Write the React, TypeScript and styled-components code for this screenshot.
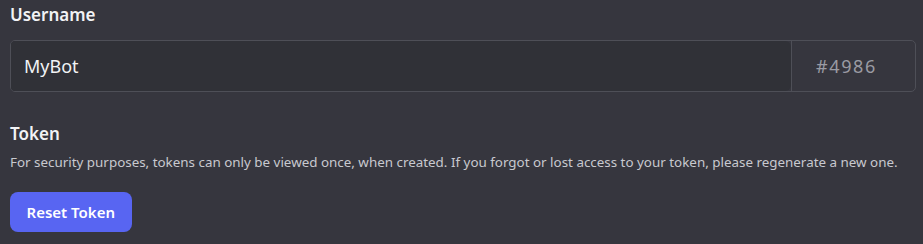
import React from 'react';
import styled, { createGlobalStyle } from 'styled-components';

const GlobalStyle = createGlobalStyle`
  html, body {
    margin: 0;
    padding: 0;
    background: #36363e;
  }
  body {
    font-family: "Noto Sans", "Open Sans", sans-serif;
    color: #f2f3f5;
  }
`;

const Page = styled.div`
  width: 923px;
  height: 244px;
  box-sizing: border-box;
  padding: 4px 7px 0 10px;
  background: #36363e;
`;

const Section = styled.section<{ $gap?: number }>`
  display: flex;
  flex-direction: column;
  margin-bottom: ${(p) => p.$gap ?? 0}px;
`;

const Heading = styled.h2`
  margin: 0;
  font-size: 17px;
  line-height: 22px;
  font-weight: 600;
  color: #f2f3f5;
`;

const InputWrap = styled.div`
  display: flex;
  margin-top: 14px;
  height: 52px;
  box-sizing: border-box;
  border: 1px solid #4e4f57;
  border-radius: 5px;
  overflow: hidden;
`;

const NameField = styled.div`
  flex: 1;
  display: flex;
  align-items: center;
  padding: 0 13px;
  background: #303137;
  border-radius: 0 6px 6px 0;
  font-size: 18px;
  color: #f2f3f5;
`;

const Discriminator = styled.div`
  width: 124px;
  box-sizing: border-box;
  padding-right: 14px;
  display: flex;
  align-items: center;
  justify-content: center;
  border-left: 1px solid #4e4f57;
  font-size: 18px;
  letter-spacing: 1.6px;
  color: #9a9ba3;
`;

const Description = styled.p`
  margin: 8px 0 0;
  font-size: 13.4px;
  line-height: 18px;
  color: #c8c9cf;
  white-space: nowrap;
`;

const Button = styled.button`
  margin-top: 21px;
  align-self: flex-start;
  height: 40px;
  padding: 0 16.5px;
  border: none;
  border-radius: 8px;
  background: #5865f2;
  color: #ffffff;
  font-family: inherit;
  font-size: 15px;
  font-weight: 600;
  cursor: pointer;
`;

export default function App() {
  return (
    <>
      <GlobalStyle />
      <Page>
        <Section $gap={31}>
          <Heading>Username</Heading>
          <InputWrap>
            <NameField>MyBot</NameField>
            <Discriminator>#4986</Discriminator>
          </InputWrap>
        </Section>
        <Section>
          <Heading>Token</Heading>
          <Description>
            For security purposes, tokens can only be viewed once, when created. If you forgot or lost access to your
            token, please regenerate a new one.
          </Description>
          <Button>Reset Token</Button>
        </Section>
      </Page>
    </>
  );
}
